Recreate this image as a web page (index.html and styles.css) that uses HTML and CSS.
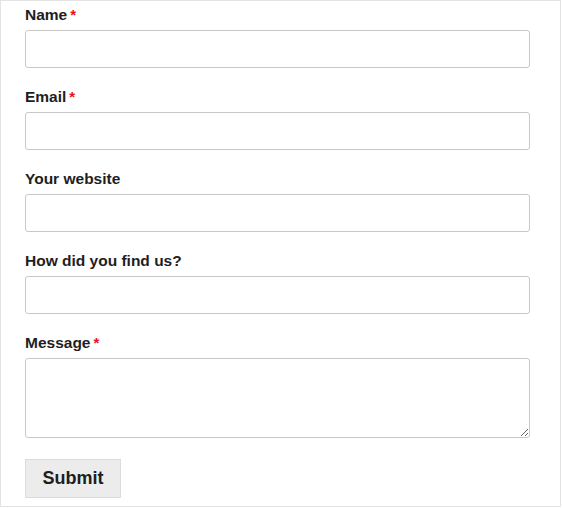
FILE: index.html
```html
<!DOCTYPE html>
<html lang="en">
<head>
<meta charset="utf-8">
<title>Contact form</title>
<link rel="stylesheet" href="styles.css">
</head>
<body>
<div class="frame">
  <form class="form">
    <div class="field">
      <label class="label">Name<span class="req">*</span></label>
      <input class="input" type="text">
    </div>
    <div class="field">
      <label class="label">Email<span class="req">*</span></label>
      <input class="input" type="text">
    </div>
    <div class="field">
      <label class="label">Your website</label>
      <input class="input" type="text">
    </div>
    <div class="field">
      <label class="label">How did you find us?</label>
      <input class="input" type="text">
    </div>
    <div class="field field-last">
      <label class="label">Message<span class="req">*</span></label>
      <textarea class="textarea"></textarea>
    </div>
    <button class="submit" type="button">Submit</button>
  </form>
</div>
</body>
</html>
```

FILE: styles.css
```css
html, body {
  margin: 0;
  padding: 0;
  background: #ffffff;
}

.frame {
  box-sizing: border-box;
  width: 561px;
  height: 507px;
  border: 1px solid #e3e3e3;
  padding: 0 30px 0 24px;
}

.form {
  display: flex;
  flex-direction: column;
  font-family: "Liberation Sans", Arial, sans-serif;
  color: #1e1e1e;
}

.field {
  display: flex;
  flex-direction: column;
  margin-bottom: 15px;
}

.field-last {
  margin-bottom: 21px;
}

.label {
  display: block;
  font-size: 15.5px;
  font-weight: bold;
  line-height: 28px;
  margin-bottom: 1px;
}

.req {
  color: #e8111a;
  font-weight: bold;
  font-size: 15px;
  margin-left: 3px;
}

.input,
.textarea {
  box-sizing: border-box;
  width: 505px;
  height: 38px;
  margin: 0;
  border: 1px solid #c8c8c8;
  border-radius: 3px;
  background: #ffffff;
  font-family: "Liberation Sans", Arial, sans-serif;
  font-size: 15px;
  padding: 6px 8px;
}

.textarea {
  display: block;
  height: 80px;
  resize: vertical;
}

.submit {
  box-sizing: border-box;
  align-self: flex-start;
  width: 96px;
  height: 39px;
  margin: 0;
  border: 1px solid #dcdcdc;
  border-radius: 0;
  background: #ececec;
  color: #1e1e1e;
  font-family: "Liberation Sans", Arial, sans-serif;
  font-size: 18px;
  font-weight: bold;
  padding: 0;
}
```
